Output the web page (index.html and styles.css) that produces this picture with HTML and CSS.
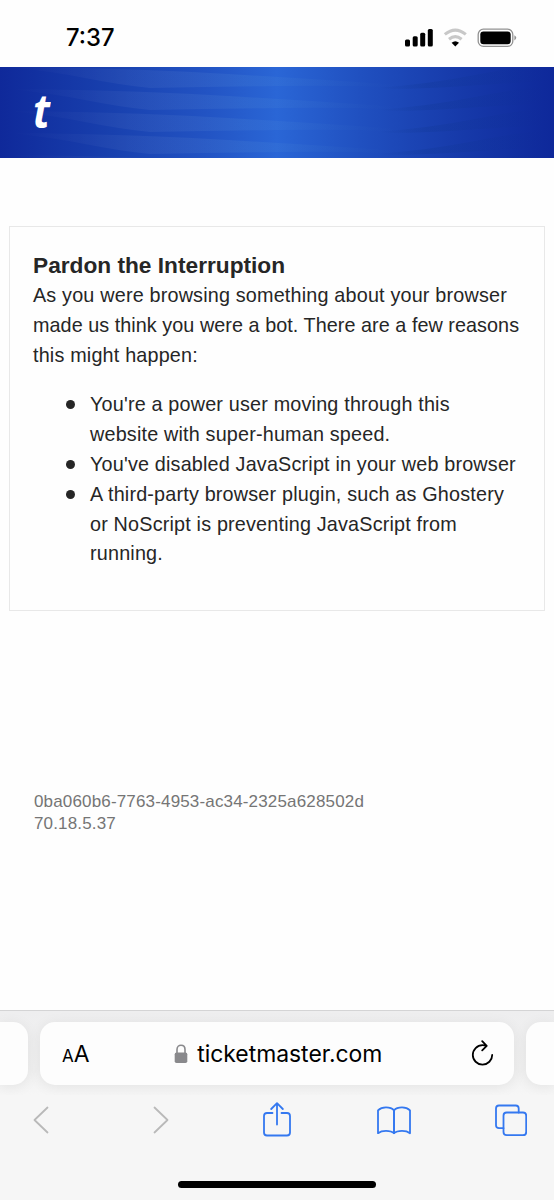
FILE: index.html
```
<!DOCTYPE html>
<html lang="en">
  <head>
    <meta charset="UTF-8" />
    <meta name="viewport" content="width=device-width, initial-scale=1.0" />
    <title>ticketmaster.com</title>
    <link rel="stylesheet" href="styles.css">
  </head>
  <body>
    <div class="status-bar">
      <span class="time">7:37</span>
      <svg class="status-icons" width="112" height="20" viewBox="0 0 112 20">
        <rect x="0" y="11.5" width="5" height="7" rx="1.5" />
        <rect x="7.7" y="8.3" width="5" height="10.2" rx="1.5" />
        <rect x="15.2" y="4.7" width="5" height="13.8" rx="1.5" />
        <rect x="22.8" y="1" width="5" height="17.5" rx="1.5" />
        <path d="M39.8 6.4Q50.3 -2.2 60.8 6.4" fill="none" stroke="#c8c8c8" stroke-width="3.1" />
        <path d="M44 11.3Q50.3 6 56.6 11.3" fill="none" stroke="#c8c8c8" stroke-width="3.1" />
        <path d="M46.6 14.8Q50.3 11.8 54 14.8L50.3 18.5Z" />
        <rect x="73.2" y="1.2" width="34.6" height="17.2" rx="5.2" fill="none" stroke="#929292" stroke-width="1.3" />
        <rect x="75.3" y="3.4" width="30.4" height="12.8" rx="3.2" />
        <path d="M109.4 7.2Q113.2 9.8 109.4 12.4Z" fill="#929292" />
      </svg>
    </div>

    <header class="banner">
      <svg class="waves" width="554" height="91" viewBox="0 0 554 91">
        <defs>
          <linearGradient id="light" x1="0" x2="1">
            <stop offset="0" stop-color="#fff" stop-opacity="0" />
            <stop offset="0.3" stop-color="#fff" stop-opacity="0.045" />
            <stop offset="0.6" stop-color="#8cc8e0" stop-opacity="0.08" />
            <stop offset="1" stop-color="#6ab0c0" stop-opacity="0" />
          </linearGradient>
          <linearGradient id="dark" x1="0" x2="1">
            <stop offset="0" stop-color="#0a3080" stop-opacity="0" />
            <stop offset="0.3" stop-color="#0a3080" stop-opacity="0.17" />
            <stop offset="1" stop-color="#0a3080" stop-opacity="0" />
          </linearGradient>
          <g id="wave">
            <path fill="url(#light)" d="M8 0Q120 1 210 6T400 18L390 20Q340 18 277 19T150 21Q120 18 85 11T8 0Z" />
            <path fill="url(#dark)" d="M375 21Q430 17 475 8T546 -2V14Q500 17 450 20T375 21Z" />
          </g>
        </defs>
        <use href="#wave" y="0" />
        <use href="#wave" y="22" />
        <use href="#wave" y="44" />
        <use href="#wave" y="66" />
        <use href="#wave" y="88" />
      </svg>
      <span class="logo">t</span>
    </header>

    <main class="content">
      <section class="card">
        <h1>Pardon the Interruption</h1>
        <p>As you were browsing something about your browser<br><span class="tight">made us think you were a bot. There are a few reasons</span><br>this might happen:</p>
        <ul>
          <li>You're a power user moving through this<br>website with super-human speed.</li>
          <li>You've disabled JavaScript in your web browser</li>
          <li>A third-party browser plugin, such as Ghostery<br>or NoScript is preventing JavaScript from<br>running.</li>
        </ul>
      </section>
      <div class="request-info">0ba060b6-7763-4953-ac34-2325a628502d<br>70.18.5.37</div>
    </main>

    <footer class="browser">
      <div class="tabs">
        <div class="tab prev"></div>
        <div class="tab address">
          <span class="text-size"><small>A</small>A</span>
          <div class="domain">
            <svg width="14" height="20" viewBox="0 0 14 20">
              <path d="M3 9V5.5C3 -0.2 11 -0.2 11 5.5V9" fill="none" stroke="#89898c" stroke-width="1.6" />
              <rect x="0.7" y="8.5" width="12.6" height="10.6" rx="1.8" fill="#89898c" />
            </svg>
            <span>ticketmaster.com</span>
          </div>
          <svg class="reload" width="24" height="28" viewBox="0 0 24 28">
            <path d="M16.5 5.9Q14.5 5.2 12.5 5.2A9.7 9.7 0 1 0 22.2 14.9M12.2 1.2L16.7 5.9L12.2 10.3" />
          </svg>
        </div>
        <div class="tab next"></div>
      </div>
      <nav class="toolbar">
        <svg class="disabled" width="16" height="36" viewBox="0 0 16 36"><path d="M14.5 5.5L1.5 18L14.5 30.5" /></svg>
        <svg class="disabled" width="16" height="36" viewBox="0 0 16 36"><path d="M1.5 5.5L14.5 18L1.5 30.5" /></svg>
        <svg width="28" height="36" viewBox="0 0 28 36">
          <path d="M9.5 11H4Q1 11 1 14V30.5Q1 33.5 4 33.5H24Q27 33.5 27 30.5V14Q27 11 24 11H18.5M14 22.5V1.5M8.2 7L14 1.2L19.8 7" />
        </svg>
        <svg width="34" height="36" viewBox="0 0 34 36">
          <path d="M17 8.3Q14.5 5.3 9 5.3Q4 5.3 1 8.3V31.2Q4 28.9 9 28.9Q14.5 28.9 17 31.2Q19.5 28.9 25 28.9Q30 28.9 33 31.2V8.3Q30 5.3 25 5.3Q19.5 5.3 17 8.3ZV31.2" />
          <path d="M17 8.3V31.2" />
        </svg>
        <svg width="32" height="36" viewBox="0 0 32 36">
          <path d="M8.5 26.2H4Q1 26.2 1 23.2V6.5Q1 3.5 4 3.5H20.7Q23.7 3.5 23.7 6.5V10.5" />
          <rect x="8.5" y="10.5" width="22.7" height="22.7" rx="3.2" />
        </svg>
      </nav>
      <div class="home-indicator"></div>
    </footer>
  </body>
</html>
```
FILE: styles.css
```
*
{
  box-sizing: border-box;
}
body
{
  margin: 0;
  height: 1200px;
  display: flex;
  flex-direction: column;
  overflow: hidden;
  background-color: #fefefe;
  color: #262626;
  font-family: "Liberation Sans", Arial, sans-serif;
}
svg
{
  display: block;
  flex: none;
}
.status-bar
{
  height: 67px;
  padding: 8px 37px 0 66px;
  display: flex;
  align-items: center;
  justify-content: space-between;
}
.time
{
  font-family: Inter, sans-serif;
  font-size: 23.8px;
  font-weight: 500;
  color: #000;
}
.banner
{
  position: relative;
  height: 91px;
  padding-left: 33px;
  background: linear-gradient(90deg, #0f299a 0%, #1840ae 20%, #2253c3 37%, #2a66d6 50%, #2050c0 65%, #173bab 82%, #0e289a 100%);
}
.waves
{
  position: absolute;
  top: 0;
  left: 0;
}
.logo
{
  position: relative;
  display: block;
  color: #fff;
  font-family: "Open Sans", sans-serif;
  font-size: 46px;
  font-weight: 700;
  font-style: italic;
  line-height: 86px;
  transform: scaleX(0.9);
  transform-origin: 0 0;
}
.content
{
  flex: 1;
  padding: 68px 9px 0;
}
.card
{
  height: 385px;
  padding: 23px 23px 0;
  border: 1.5px solid #e8e8e8;
  font-size: 19.8px;
  line-height: 29.8px;
  letter-spacing: 0.18px;
  white-space: nowrap;
}
.card h1
{
  margin: 0;
  font-size: 22.7px;
  line-height: 30px;
  letter-spacing: 0;
}
.card p
{
  margin: 1px 0 0;
}
.card .tight
{
  letter-spacing: 0.05px;
}
.card ul
{
  margin: 20px 0 0;
  padding-left: 57px;
}
.card li
{
  list-style: none;
  position: relative;
}
.card li::before
{
  content: "";
  position: absolute;
  left: -24px;
  top: 10px;
  width: 9px;
  height: 9px;
  border-radius: 50%;
  background-color: #262626;
}
.request-info
{
  margin: 180px 0 0 25px;
  color: #757575;
  font-size: 17px;
  line-height: 21.5px;
  letter-spacing: 0.16px;
}
.browser
{
  height: 190px;
  border-top: 1px solid #d4d4d5;
  background-color: #f6f6f6;
}
.tabs
{
  height: 84px;
  padding-top: 11px;
  display: grid;
  grid-template-columns: 28px 474px 28px;
  gap: 12px;
  overflow: hidden;
  background: linear-gradient(#eeeeef, #f1f1f1 70%, #f6f6f6);
}
.tab
{
  height: 63px;
  border-radius: 15px;
  background-color: #fdfdfd;
  box-shadow: 0 2px 14px rgba(0, 0, 0, 0.07);
}
.prev
{
  border-radius: 0 15px 15px 0;
}
.next
{
  border-radius: 15px 0 0 15px;
}
.address
{
  padding: 0 20px 0 22px;
  display: flex;
  align-items: center;
  justify-content: space-between;
  font-family: Inter, sans-serif;
  font-size: 22.9px;
  color: #000;
}
.text-size small
{
  font-size: 17px;
}
.domain
{
  margin-right: 3px;
  display: flex;
  align-items: center;
  gap: 9px;
}
.reload
{
  fill: none;
  stroke: #000;
  stroke-width: 1.8;
  stroke-linecap: round;
  stroke-linejoin: round;
}
.toolbar
{
  height: 50px;
  padding-top: 7px;
  display: grid;
  grid-template-columns: 82px 158px 74px 160px 74px;
  justify-items: center;
}
.toolbar svg
{
  fill: none;
  stroke: #3478f0;
  stroke-width: 1.8;
  stroke-linecap: round;
  stroke-linejoin: round;
}
.toolbar .disabled
{
  stroke: #b9b9b9;
}
.home-indicator
{
  width: 198px;
  height: 7px;
  margin: 36px auto 0;
  border-radius: 4px;
  background-color: #000;
}
```
